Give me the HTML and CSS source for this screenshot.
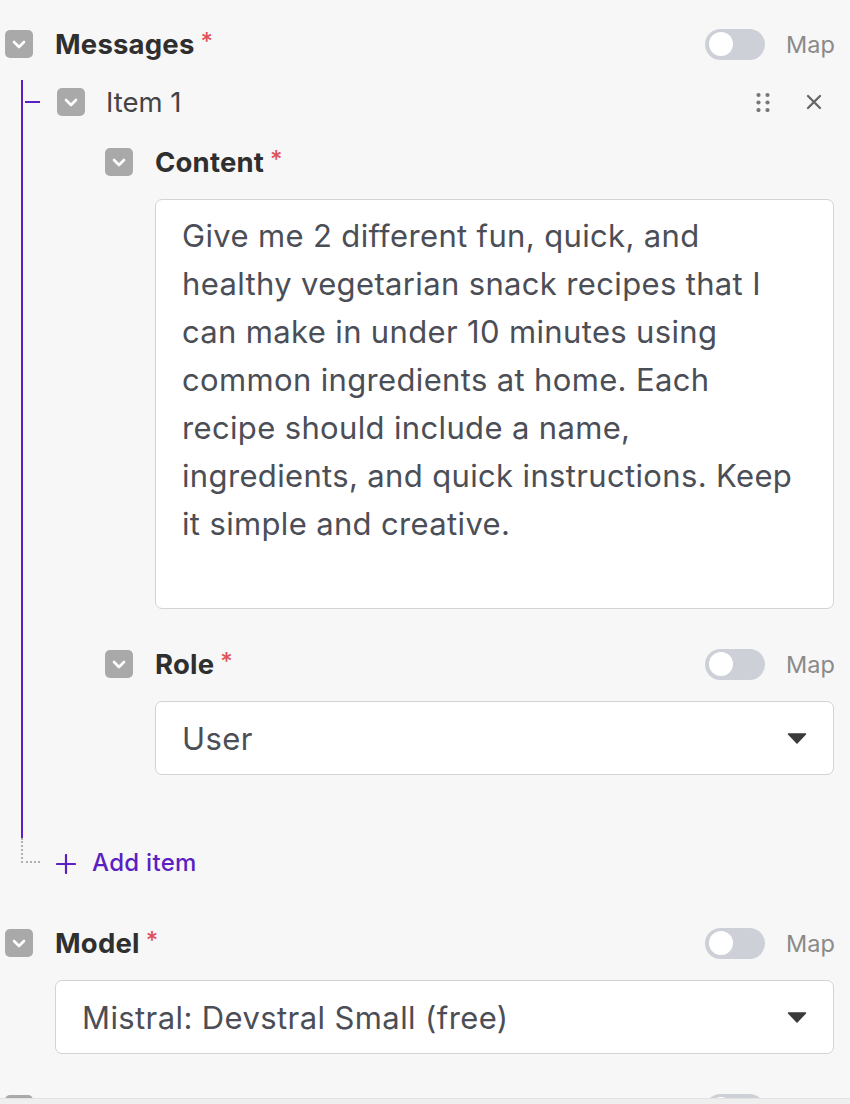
FILE: index.html
```html
<!DOCTYPE html>
<html>
<head>
<meta charset="utf-8">
<link rel="stylesheet" href="styles.css">
</head>
<body>
<div class="panel">
  <div class="head">
    <span class="chk"><svg viewBox="0 0 28 28" width="28" height="28"><path d="M9 12 L14 17 L19 12" fill="none" stroke="#fff" stroke-width="2.6" stroke-linecap="round" stroke-linejoin="round"/></svg></span>
    <span class="label">Messages<span class="req">*</span></span>
    <span class="map"><span class="toggle"><span class="knob"></span></span><span class="map-text">Map</span></span>
  </div>

  <div class="children">
    <div class="item-head">
      <span class="chk"><svg viewBox="0 0 28 28" width="28" height="28"><path d="M9 12 L14 17 L19 12" fill="none" stroke="#fff" stroke-width="2.6" stroke-linecap="round" stroke-linejoin="round"/></svg></span>
      <span class="item-label">Item 1</span>
      <span class="item-actions">
        <svg class="drag" viewBox="0 0 14 20" width="14" height="20"><circle cx="2.5" cy="3" r="2.1"/><circle cx="11.5" cy="3" r="2.1"/><circle cx="2.5" cy="10.5" r="2.1"/><circle cx="11.5" cy="10.5" r="2.1"/><circle cx="2.5" cy="18" r="2.1"/><circle cx="11.5" cy="18" r="2.1"/></svg>
        <svg class="close" viewBox="0 0 16 16" width="16" height="16"><path d="M2 2 L14 14 M14 2 L2 14" stroke="#666" stroke-width="2.3" stroke-linecap="round"/></svg>
      </span>
    </div>

    <div class="item-body">
      <div class="head">
        <span class="chk"><svg viewBox="0 0 28 28" width="28" height="28"><path d="M9 12 L14 17 L19 12" fill="none" stroke="#fff" stroke-width="2.6" stroke-linecap="round" stroke-linejoin="round"/></svg></span>
        <span class="label">Content<span class="req">*</span></span>
      </div>
      <div class="textarea">Give me 2 different fun, quick, and healthy vegetarian snack recipes that I can make in under 10 minutes using common ingredients at home. Each recipe should include a name, ingredients, and quick instructions. Keep it simple and creative.</div>

      <div class="head gap-top">
        <span class="chk"><svg viewBox="0 0 28 28" width="28" height="28"><path d="M9 12 L14 17 L19 12" fill="none" stroke="#fff" stroke-width="2.6" stroke-linecap="round" stroke-linejoin="round"/></svg></span>
        <span class="label">Role<span class="req">*</span></span>
        <span class="map"><span class="toggle"><span class="knob"></span></span><span class="map-text">Map</span></span>
      </div>
      <div class="select">
        <span>User</span>
        <svg class="caret" viewBox="0 0 20 11" width="20" height="11"><path d="M1.5 1 L18.5 1 L10 10 Z" fill="#3a3a3a" stroke="#3a3a3a" stroke-width="1.5" stroke-linejoin="round"/></svg>
      </div>
    </div>
  </div>

  <div class="add-row">
    <span class="connector"></span>
    <svg class="plus" viewBox="0 0 20 20" width="20" height="20"><path d="M10 1 V19 M1 10 H19" stroke="#5b1fc4" stroke-width="2.2" stroke-linecap="round"/></svg>
    <span class="add-text">Add item</span>
  </div>

  <div class="head model-head">
    <span class="chk"><svg viewBox="0 0 28 28" width="28" height="28"><path d="M9 12 L14 17 L19 12" fill="none" stroke="#fff" stroke-width="2.6" stroke-linecap="round" stroke-linejoin="round"/></svg></span>
    <span class="label">Model<span class="req">*</span></span>
    <span class="map"><span class="toggle"><span class="knob"></span></span><span class="map-text">Map</span></span>
  </div>
  <div class="select wide">
    <span>Mistral: Devstral Small (free)</span>
    <svg class="caret" viewBox="0 0 20 11" width="20" height="11"><path d="M1.5 1 L18.5 1 L10 10 Z" fill="#3a3a3a" stroke="#3a3a3a" stroke-width="1.5" stroke-linejoin="round"/></svg>
  </div>

  <div class="head next-head">
    <span class="chk"></span>
    <span class="map"><span class="toggle"><span class="knob"></span></span><span class="map-text"></span></span>
  </div>
</div>
<div class="footer-edge"></div>
</body>
</html>
```

FILE: styles.css
```css
html, body {
  margin: 0;
  padding: 0;
  background: #f7f7f7;
  overflow: hidden;
}
body {
  font-family: "Inter", "Noto Sans", sans-serif;
  color: #333;
  height: 1104px;
}
.panel {
  padding: 30px 16px 0 5px;
}
.head {
  display: flex;
  align-items: center;
  height: 28px;
}
.chk {
  width: 28px;
  height: 28px;
  border-radius: 5px;
  background: #a9a9a9;
  flex: none;
  display: block;
}
.chk svg { display: block; }
.label {
  margin-left: 22px;
  font-size: 27.5px;
  font-weight: 700;
  color: #2f2f2f;
  letter-spacing: 0.2px;
}
.req {
  color: #e0525c;
  font-weight: 500;
  margin-left: 6px;
  font-size: 24px;
  position: relative;
  top: -4px;
}
.map {
  margin-left: auto;
  display: flex;
  align-items: center;
}
.toggle {
  width: 60px;
  height: 31px;
  border-radius: 16px;
  background: #cdd1d7;
  display: flex;
  align-items: center;
  padding-left: 4px;
  box-sizing: border-box;
}
.knob {
  width: 24px;
  height: 24px;
  border-radius: 50%;
  background: #fff;
}
.map-text {
  margin-left: 21px;
  font-size: 23.5px;
  color: #8a8a8a;
  width: 48px;
}
.children {
  margin: 22px 0 0 16px;
  border-left: 2px solid #5b1fc4;
  padding: 8px 0 63px 34px;
}
.item-head {
  display: flex;
  align-items: center;
  height: 28px;
  position: relative;
}
.item-head::before {
  content: "";
  position: absolute;
  left: -32px;
  top: 13px;
  width: 15px;
  height: 2px;
  background: #5b1fc4;
}
.item-label {
  margin-left: 21px;
  font-size: 27.5px;
  color: #444;
}
.item-actions {
  margin-left: auto;
  display: flex;
  align-items: center;
  gap: 36px;
  padding-right: 12px;
}
.drag { fill: #777; display: block; }
.close { display: block; }
.item-body {
  margin-top: 32px;
  padding-left: 48px;
}
.textarea {
  margin: 23px 0 0 50px;
  height: 410px;
  box-sizing: border-box;
  background: #fff;
  border: 1.5px solid #d3d3d3;
  border-radius: 7px;
  padding: 12px 26px 0 26px;
  font-size: 31px;
  letter-spacing: 0.35px;
  line-height: 48px;
  color: #4b4e56;
}
.gap-top { margin-top: 41px; }
.select {
  margin: 23px 0 0 50px;
  height: 74px;
  box-sizing: border-box;
  background: #fff;
  border: 1.5px solid #d3d3d3;
  border-radius: 7px;
  padding: 0 26px 0 26px;
  display: flex;
  align-items: center;
  justify-content: space-between;
  font-size: 31px;
  letter-spacing: 0.4px;
  color: #4b4e56;
}
.caret { display: block; }
.add-row {
  margin-left: 16px;
  height: 50px;
  display: flex;
  align-items: flex-start;
}
.connector {
  width: 17px;
  height: 23px;
  border-left: 2px dotted #b0b0b0;
  border-bottom: 2px dotted #b0b0b0;
  flex: none;
}
.plus {
  margin: 16px 0 0 16px;
  display: block;
}
.add-text {
  margin: 10px 0 0 16px;
  font-size: 24px;
  letter-spacing: 0.3px;
  color: #5b1fc4;
  font-weight: 500;
}
.model-head { margin-top: 41px; }
.wide { margin-left: 50px; }
.next-head { margin-top: 41px; }
.footer-edge {
  position: fixed;
  left: 0;
  right: 0;
  bottom: 0;
  height: 5px;
  background: #efefef;
  border-top: 1px solid #e2e2e2;
}
```
